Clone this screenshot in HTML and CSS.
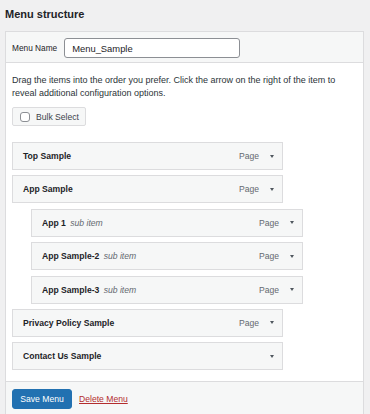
FILE: index.html
```html
<!DOCTYPE html>
<html lang="en">
<head>
    <meta charset="UTF-8">
    <meta name="viewport" content="width=device-width, initial-scale=1.0">
    <title>Menu structure</title>
    <link rel="stylesheet" href="styles.css">
</head>
<body>
    <h2 class="page-title">Menu structure</h2>
    <div class="menu-panel">
        <div class="menu-header">
            <label for="menuName">Menu Name</label>
            <input id="menuName" type="text" value="Menu_Sample">
        </div>
        <div class="menu-body">
            <p class="hint">Drag the items into the order you prefer. Click the arrow on the right of the item to reveal additional configuration options.</p>
            <label class="bulk-btn"><span class="check"></span>Bulk Select</label>

            <ul class="menu-items">
                <li class="item"><span class="title">Top Sample</span><span class="type">Page</span><span class="arrow"></span></li>
                <li class="item"><span class="title">App Sample</span><span class="type">Page</span><span class="arrow"></span></li>
                <li class="item sub"><span class="title">App 1 <em>sub item</em></span><span class="type">Page</span><span class="arrow"></span></li>
                <li class="item sub"><span class="title">App Sample-2 <em>sub item</em></span><span class="type">Page</span><span class="arrow"></span></li>
                <li class="item sub"><span class="title">App Sample-3 <em>sub item</em></span><span class="type">Page</span><span class="arrow"></span></li>
                <li class="item"><span class="title">Privacy Policy Sample</span><span class="type">Page</span><span class="arrow"></span></li>
                <li class="item"><span class="title">Contact Us Sample</span><span class="type"></span><span class="arrow"></span></li>
            </ul>
        </div>
        <div class="menu-footer">
            <button class="save-btn">Save Menu</button>
            <a href="#" class="delete-link">Delete Menu</a>
        </div>
    </div>
</body>
</html>
```

FILE: styles.css
```css
/* General Styling */
body {
    font-family: 'Liberation Sans', Arial, sans-serif;
    font-size: 8.6px;
    margin: 0;
    padding: 0;
    background: #f0f0f1;
    color: #1d2327;
    height: 414px;
    overflow: hidden;
}
.page-title {
    font-size: 11px;
    font-weight: bold;
    margin: 0;
    padding: 7px 5px 0;
    height: 24px;
    line-height: 14px;
}
.menu-panel {
    margin-left: 5px;
    width: 357px;
    border: 1px solid #dcdcde;
    border-bottom: none;
    background: #ffffff;
}
.menu-header {
    display: flex;
    align-items: center;
    padding: 6px 6px 4px;
    background: #f6f7f7;
    border-bottom: 1px solid #dcdcde;
}
.menu-header label {
    margin-right: 7px;
    font-size: 8.3px;
}
.menu-header input {
    box-sizing: border-box;
    width: 176px;
    height: 20px;
    padding: 0 7px;
    font-family: inherit;
    font-size: 9.4px;
    color: #1d2327;
    border: 1px solid #8c8f94;
    border-radius: 3px;
    background: #ffffff;
}
.menu-body {
    padding: 11px 6px 11px;
}
.hint {
    margin: 0;
    padding-right: 8px;
    font-size: 9px;
    line-height: 12.5px;
    color: #2c3338;
}
.bulk-btn {
    margin-top: 8px;
    box-sizing: border-box;
    display: flex;
    align-items: center;
    width: 74px;
    height: 19px;
    padding-left: 7px;
    background: #f6f7f7;
    border: 1px solid #dcdcde;
    border-radius: 2px;
    color: #3c434a;
}
.check {
    box-sizing: border-box;
    width: 10px;
    height: 10px;
    margin-right: 6px;
    border: 1px solid #8c8f94;
    border-radius: 3px;
    background: #ffffff;
}
.menu-items {
    list-style: none;
    margin: 16px 0 0;
    padding: 0;
}
.item {
    box-sizing: border-box;
    display: flex;
    align-items: center;
    width: 271px;
    height: 28px;
    margin-bottom: 5.4px;
    padding: 0 8px 0 10px;
    background: #f6f7f7;
    border: 1px solid #dcdcde;
}
.item:last-child {
    margin-bottom: 0;
}
.item.sub {
    margin-left: 19px;
    width: 272px;
}
.item .title {
    flex: 1;
    font-weight: bold;
}
.item .title em {
    font-weight: normal;
    color: #646970;
    margin-left: 2px;
}
.item .type {
    color: #646970;
    margin-right: 11px;
}
.arrow {
    width: 0;
    height: 0;
    border-left: 2.5px solid transparent;
    border-right: 2.5px solid transparent;
    border-top: 3.5px solid #50575e;
}
.menu-footer {
    display: flex;
    align-items: center;
    padding: 7px 6px 10px;
    background: #f6f7f7;
    border-top: 1px solid #dcdcde;
}
.save-btn {
    width: 60px;
    height: 20px;
    padding: 0;
    font-family: inherit;
    font-size: 8.6px;
    color: #ffffff;
    background: #2271b1;
    border: 1px solid #2271b1;
    border-radius: 3px;
}
.delete-link {
    margin-left: 7px;
    color: #b32d2e;
    text-decoration: underline;
}
```
